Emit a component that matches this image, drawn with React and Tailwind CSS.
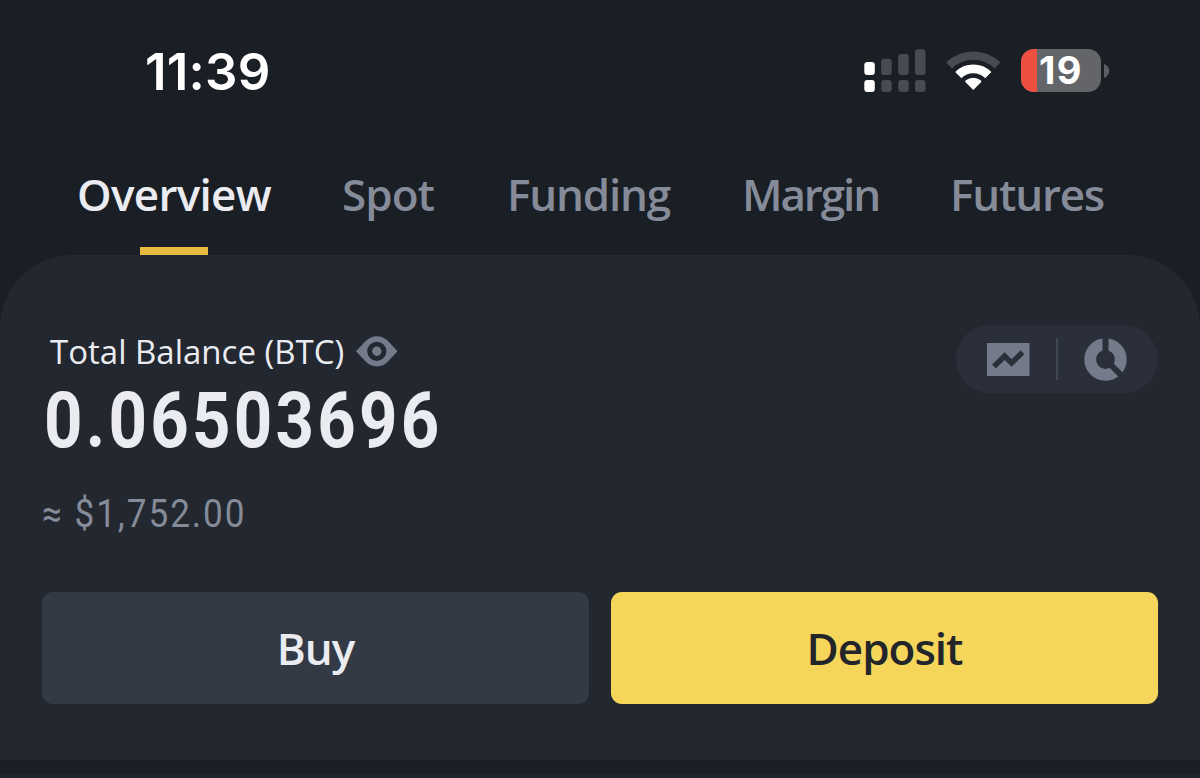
import { useState } from 'react';
import clsx from 'clsx';

const tabs = [
  { name: 'Overview', width: 'w-[196px]', tracking: 'tracking-[-0.7px]' },
  { name: 'Spot', width: 'w-[98px]', tracking: 'tracking-[-0.9px]' },
  { name: 'Funding', width: 'w-[169px]', tracking: 'tracking-[-1.2px]' },
  { name: 'Margin', width: 'w-[141px]', tracking: 'tracking-[-2.1px]' },
  { name: 'Futures', width: 'w-[158px]', tracking: 'tracking-[-1.2px]' },
];

const SignalIcon = () => (
  <svg width="62" height="43" viewBox="0 0 62 43" fill="#484b54">
    <rect x="0.3" y="13" width="10.5" height="13" rx="3" fill="#fff" />
    <rect x="0.3" y="31" width="10.5" height="12" rx="3" fill="#fff" />
    <rect x="17.2" y="9.7" width="10.5" height="16.3" rx="3" />
    <rect x="17.2" y="31" width="10.5" height="12" rx="3" />
    <rect x="34.2" y="5" width="10.5" height="21" rx="3" />
    <rect x="34.2" y="31" width="10.5" height="12" rx="3" />
    <rect x="51" y="0.3" width="10.5" height="25.7" rx="3" />
    <rect x="51" y="31" width="10.5" height="12" rx="3" />
  </svg>
);

const WifiIcon = () => (
  <svg width="56" height="43" viewBox="0 0 56 43" fill="none">
    <path d="M4.1 16.4A34.8 34.8 0 0 1 52.5 16.4" stroke="#484b54" strokeWidth="8.4" />
    <path d="M13.3 26.1A21.3 21.3 0 0 1 43.3 26.1" stroke="#fff" strokeWidth="8.8" />
    <path d="M20.6 33.3Q19.6 32.2 20.8 31.3A12.5 12.5 0 0 1 35.8 31.3Q37 32.2 36 33.3L28.3 41Z" fill="#fff" />
  </svg>
);

const Battery = () => (
  <div className="flex items-center gap-[3px]">
    <div className="flex h-[43px] w-20 rounded-[13px] bg-[#636569]">
      <div className="w-4 rounded-l-[13px] bg-[#ed4f40]" />
      <span className="pl-[2px] font-[Inter,sans-serif] text-[38px] leading-[43px] font-bold tracking-[1.4px] text-white">19</span>
    </div>
    <svg width="6" height="14" viewBox="0 0 6 14">
      <path d="M0 0C7 2.5 7 11.5 0 14Z" fill="#5b5e64" />
    </svg>
  </div>
);

const EyeIcon = () => (
  <svg width="42" height="31" viewBox="0 0 42 31" fill="#737a8a">
    <path
      fillRule="evenodd"
      d="M0 15.3L9.7 5C16 -1.4 26 -1.4 32 5L41.5 15.3L32 25.5C26 32 16 32 9.7 25.5ZM20.8 5.7A9.6 9.6 0 1 0 20.8 24.9A9.6 9.6 0 1 0 20.8 5.7Z"
    />
    <circle cx="20.8" cy="15.3" r="4.7" />
  </svg>
);

const ChartIcon = () => (
  <svg width="43" height="33" viewBox="0 0 43 33">
    <rect width="42.5" height="33" fill="#737a8a" />
    <path d="M7 23.5L17.6 13L24.6 20L35.5 9.3" fill="none" stroke="#2a2f3a" strokeWidth="5.4" />
  </svg>
);

const DonutIcon = () => (
  <svg width="43" height="43" viewBox="0 0 43 43">
    <circle cx="21.5" cy="21.5" r="15.3" fill="none" stroke="#737a8a" strokeWidth="11.8" />
    <path d="M21.5 0V21.5L38 38" fill="none" stroke="#2a2f3a" strokeWidth="6" />
  </svg>
);

const App = () => {
  const [active, setActive] = useState('Overview');

  return (
    <div className="flex h-[778px] w-[1200px] flex-col overflow-hidden bg-[#1a1e25] font-['Open_Sans',sans-serif]">
      {/* Status bar */}
      <div className="flex h-[143px] items-start justify-between pt-[49px] pr-[90px] pl-[145px]">
        <span className="font-[Inter,sans-serif] text-[51px] leading-[46px] font-semibold tracking-[0.2px] text-white">11:39</span>
        <div className="flex items-center">
          <SignalIcon />
          <div className="ml-[19px]"><WifiIcon /></div>
          <div className="ml-5"><Battery /></div>
        </div>
      </div>

      {/* Wallet tabs */}
      <div className="flex h-28 gap-[67px] pl-[76px]">
        {tabs.map((tab) => (
          <button
            key={tab.name}
            onClick={() => setActive(tab.name)}
            className={clsx(
              'flex shrink-0 flex-col items-center justify-between pt-[20px] text-[44px] leading-[62px] font-semibold whitespace-nowrap',
              tab.width,
              tab.tracking,
              active === tab.name ? 'text-[#eaecf1]' : 'text-[#858b99]'
            )}
          >
            {tab.name}
            {active === tab.name && <span className="h-[8px] w-[68px] bg-[#e8ba3f]" />}
          </button>
        ))}
      </div>

      {/* Balance panel */}
      <div className="flex h-[505px] shrink-0 flex-col rounded-t-[72px] bg-[#23272f] px-[42px] pt-[70px]">
        <div className="flex h-[267px] justify-between">
          <div className="flex flex-col">
            <div className="flex h-[52px] items-center pl-[8px]">
              <span className="w-[306px] pt-[2px] text-[33px] leading-[50px] whitespace-nowrap text-[#eaecf1]">Total Balance (BTC)</span>
              <EyeIcon />
            </div>
            <span className="mt-[1px] ml-[2px] w-[400px] origin-left scale-x-86 font-[Roboto,sans-serif] text-[78px] leading-[86px] font-bold tracking-[3.8px] whitespace-nowrap text-[#eaecf1]">0.06503696</span>
            <span className="mt-[27px] origin-left scale-x-90 font-[Roboto,sans-serif] text-[39px] leading-[46px] tracking-[2.2px] whitespace-nowrap text-[#858b99]">≈ $1,752.00</span>
          </div>
          <div className="flex h-[68px] w-[202px] items-center rounded-full bg-[#2a2f3a] pl-[31px]">
            <ChartIcon />
            <span className="ml-[26px] h-[42px] w-[2px] bg-[#414754]" />
            <span className="ml-[26px]"><DonutIcon /></span>
          </div>
        </div>
        <div className="flex gap-[22px] text-[44px] font-semibold tracking-[-1px]">
          <button className="h-28 flex-1 rounded-[11px] bg-[#343a45] text-[#eaecf1]">Buy</button>
          <button className="h-28 flex-1 rounded-[11px] bg-[#f5d65b] text-[#222529]">Deposit</button>
        </div>
      </div>
      <div className="mt-[14px] h-1 shrink-0 bg-[#20242c]" />
    </div>
  );
};

export default App;
